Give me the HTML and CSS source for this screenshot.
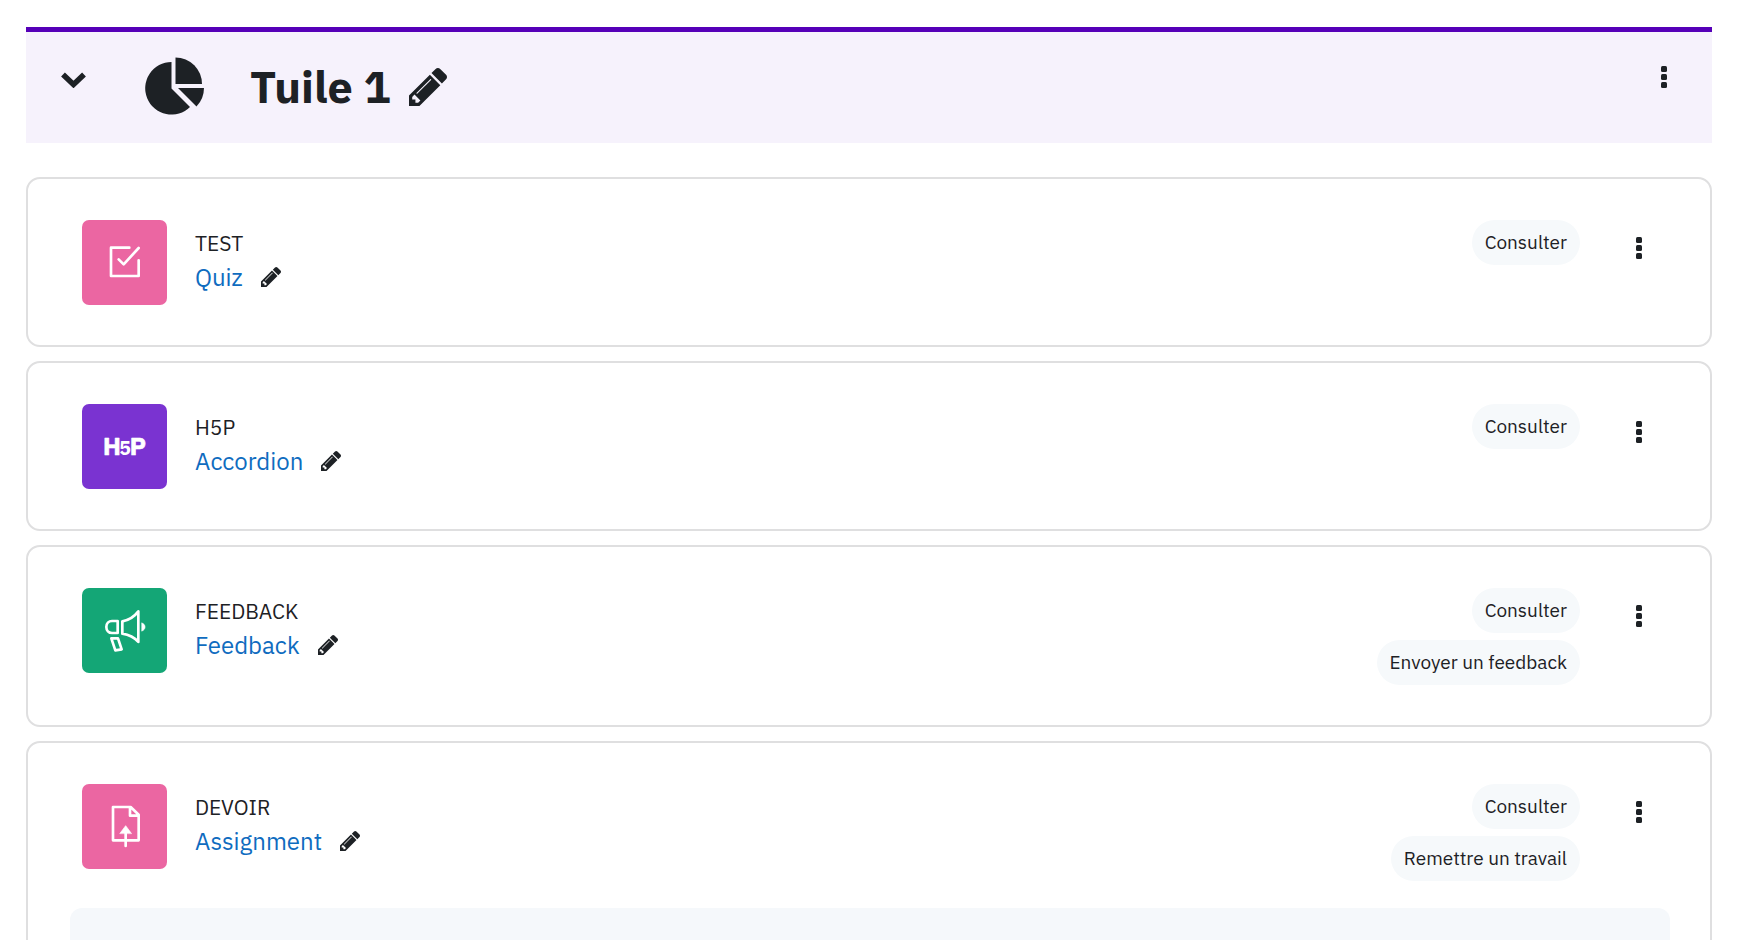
FILE: index.html
```html
<!DOCTYPE html>
<html lang="fr">
	<head>
		<meta charset="UTF-8">
		<title>Tuile 1</title>
		<link rel="stylesheet" href="styles.css">
	</head>
	<body>
		<!-- shared icons -->
		<svg class="sprite" aria-hidden="true">
			<symbol id="pencil" viewBox="128 149 1515 1515">
				<path d="M491 1536l91-91-235-235-91 91v107h128v128h107zm523-928q0-22-22-22-10 0-17 7l-542 542q-7 7-7 17 0 22 22 22 10 0 17-7l542-542q7-7 7-17zm-54-192l416 416-832 832h-416v-416zm683 96q0 53-37 90l-166 166-416-416 166-165q36-38 90-38 53 0 91 38l235 234q37 39 37 91z"/>
			</symbol>
			<symbol id="dots" viewBox="0 0 6 22">
				<rect width="6" height="6" rx="1.5"/>
				<rect y="8" width="6" height="6" rx="1.5"/>
				<rect y="16" width="6" height="6" rx="1.5"/>
			</symbol>
		</svg>

		<main class="course">
			<header class="section-header">
				<button class="icon-btn toggle" aria-label="Replier">
					<svg viewBox="0 0 50 32"><path d="M4 5l21 20L46 5" fill="none" stroke="currentColor" stroke-width="11"/></svg>
				</button>
				<svg class="tile-icon" viewBox="145 57 60 58">
					<path d="M171.5 88.5V62A26.3 26.3 0 1 0 190 107z"/>
					<path d="M175.5 57.5A26.5 26.5 0 0 1 202 84h-26.5z"/>
					<path d="M178 88h26a27 27 0 0 1-7.5 18.5z"/>
				</svg>
				<h1>Tuile 1</h1>
				<button class="icon-btn edit-title" aria-label="Modifier le titre"><svg><use href="#pencil"/></svg></button>
				<button class="icon-btn menu" aria-label="Menu"><svg><use href="#dots"/></svg></button>
			</header>

			<ul class="activities">
				<li class="activity">
					<div class="row">
						<div class="mod-icon pink">
							<svg viewBox="0 0 255 255"><path d="M142 83H87v85h83v-47M110 118l15 15 45-49"/></svg>
						</div>
						<div class="name">
							<span class="type">TEST</span>
							<div class="title">
								<a href="#">Quiz</a>
								<button class="icon-btn edit" aria-label="Modifier"><svg><use href="#pencil"/></svg></button>
							</div>
						</div>
						<div class="completion">
							<span class="pill">Consulter</span>
						</div>
						<button class="icon-btn menu" aria-label="Menu"><svg><use href="#dots"/></svg></button>
					</div>
				</li>
				<li class="activity">
					<div class="row">
						<div class="mod-icon purple">
							<svg class="h5p" viewBox="0 0 255 255">
								<text y="153"><tspan x="63">H</tspan><tspan class="five" x="112">5</tspan><tspan x="143">P</tspan></text>
							</svg>
						</div>
						<div class="name">
							<span class="type">H5P</span>
							<div class="title">
								<a href="#">Accordion</a>
								<button class="icon-btn edit" aria-label="Modifier"><svg><use href="#pencil"/></svg></button>
							</div>
						</div>
						<div class="completion">
							<span class="pill">Consulter</span>
						</div>
						<button class="icon-btn menu" aria-label="Menu"><svg><use href="#dots"/></svg></button>
					</div>
				</li>
				<li class="activity">
					<div class="row">
						<div class="mod-icon green">
							<svg viewBox="0 0 255 255">
								<path d="M107 99H90c-10 0-17 8-17 18s7 18 17 18h17zM121 100c20-4 36-14 48-30v92c-12-14-28-22-48-25zM88 151h20l11 33-19 3z"/>
								<path class="solid" d="M180 105c6 2 9 7 9 12s-3 10-9 12z"/>
							</svg>
						</div>
						<div class="name">
							<span class="type">FEEDBACK</span>
							<div class="title">
								<a href="#">Feedback</a>
								<button class="icon-btn edit" aria-label="Modifier"><svg><use href="#pencil"/></svg></button>
							</div>
						</div>
						<div class="completion">
							<span class="pill">Consulter</span>
							<span class="pill">Envoyer un feedback</span>
						</div>
						<button class="icon-btn menu" aria-label="Menu"><svg><use href="#dots"/></svg></button>
					</div>
				</li>
				<li class="activity">
					<div class="row">
						<div class="mod-icon pink">
							<svg viewBox="0 0 255 255">
								<path d="M93 69h53l24 23v77H93zM144 69v26h26M131 186v-43"/>
								<path class="solid" d="M114 148l17-23 17 23z"/>
							</svg>
						</div>
						<div class="name">
							<span class="type">DEVOIR</span>
							<div class="title">
								<a href="#">Assignment</a>
								<button class="icon-btn edit" aria-label="Modifier"><svg><use href="#pencil"/></svg></button>
							</div>
						</div>
						<div class="completion">
							<span class="pill">Consulter</span>
							<span class="pill">Remettre un travail</span>
						</div>
						<button class="icon-btn menu" aria-label="Menu"><svg><use href="#dots"/></svg></button>
					</div>
					<div class="description"></div>
				</li>
			</ul>
		</main>
	</body>
</html>
```
FILE: styles.css
```css
* {
	box-sizing: border-box;
}

html {
	height: 100%;
	overflow: hidden;
}

body {
	margin: 0;
	height: 100%;
	overflow: hidden;
	background: #fff;
	color: #1d2125;
	font-family: "IBM Plex Sans", Roboto, "Noto Sans", sans-serif;
}

.sprite {
	display: none;
}

.course {
	padding: 27px 36px 0 26px;
}

.icon-btn {
	display: block;
	flex: none;
	padding: 0;
	border: 0;
	background: none;
	color: inherit;
	cursor: pointer;
}

.icon-btn svg {
	display: block;
	width: 100%;
	height: 100%;
	fill: currentColor;
}

/* section header */
.section-header {
	display: flex;
	align-items: flex-start;
	padding: 25px 45px 28px 35px;
	border-top: 5px solid #5600b8;
	background: #f6f2fc;
}

.toggle {
	width: 25px;
	height: 16px;
	margin-top: 15px;
}

.tile-icon {
	width: 60px;
	height: 58px;
	margin: 0 45px 0 59px;
	fill: #1d2125;
}

h1 {
	margin: 0;
	font-size: 45px;
	line-height: 58px;
	font-weight: 700;
}

.edit-title {
	width: 38px;
	height: 38px;
	margin: 11px 0 0 18px;
}

.menu {
	width: 6px;
	height: 22px;
}

.section-header .menu {
	margin: 9px 0 0 auto;
}

/* activity cards */
.activities {
	display: flex;
	flex-direction: column;
	gap: 14px;
	margin: 34px 0 0;
	padding: 0;
	list-style: none;
}

.activity {
	padding: 41px 40px 40px 42px;
	border: 2px solid #dfdfe0;
	border-radius: 14px;
}

.row {
	display: flex;
	align-items: flex-start;
	padding: 0 28px 0 12px;
}

.row .menu {
	margin: 17px 0 0 56px;
}

.mod-icon {
	flex: none;
	width: 85px;
	height: 85px;
	margin-right: 28px;
	border-radius: 7px;
}

.mod-icon svg {
	display: block;
	width: 100%;
	height: 100%;
	fill: none;
	stroke: #fff;
	stroke-width: 8;
	stroke-linecap: round;
	stroke-linejoin: round;
}

.mod-icon .solid {
	fill: #fff;
	stroke-width: 2;
}

.mod-icon .h5p {
	fill: #fff;
	stroke-width: 2;
	font-size: 74px;
	font-weight: 700;
}

.h5p .five {
	font-size: 58px;
	stroke: none;
}

.pink {
	background: #eb66a2;
}

.purple {
	background: #7a33d1;
}

.green {
	background: #14a676;
}

.name {
	flex: 1;
	padding-top: 6px;
}

.type {
	display: block;
	font-size: 21px;
	line-height: 34px;
}

.title {
	display: flex;
	align-items: center;
	font-size: 24px;
	line-height: 34px;
}

.title a {
	color: #0f6cbf;
	text-decoration: none;
}

.edit {
	width: 20px;
	height: 20px;
	margin-left: 18px;
}

.completion {
	display: flex;
	flex-direction: column;
	align-items: flex-end;
	gap: 7px;
}

.pill {
	padding: 0 13px;
	border-radius: 23px;
	background: #f6f9fb;
	font-size: 19px;
	line-height: 45px;
}

.description {
	height: 120px;
	margin-top: 27px;
	border-radius: 12px;
	background: #f5f8fb;
}
```
